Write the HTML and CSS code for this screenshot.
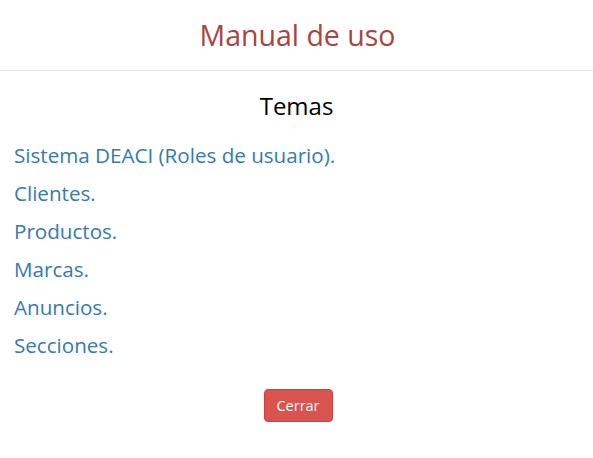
FILE: index.html
```html
<!DOCTYPE html>
<html lang="es">
<head>
<meta charset="utf-8">
<title>Manual de uso</title>
<link rel="stylesheet" href="styles.css">
</head>
<body>
<div class="modal">
  <div class="modal-header">
    <h2 class="modal-title">Manual de uso</h2>
  </div>
  <div class="modal-body">
    <h3 class="topics-title">Temas</h3>
    <ul class="topics">
      <li><a href="#">Sistema DEACI (Roles de usuario).</a></li>
      <li><a href="#">Clientes.</a></li>
      <li><a href="#">Productos.</a></li>
      <li><a href="#">Marcas.</a></li>
      <li><a href="#">Anuncios.</a></li>
      <li><a href="#">Secciones.</a></li>
    </ul>
    <div class="actions">
      <button class="btn-danger" type="button">Cerrar</button>
    </div>
  </div>
</div>
</body>
</html>
```
FILE: styles.css
```css
* { box-sizing: border-box; }
html, body {
  margin: 0;
  padding: 0;
  background: #ffffff;
}
body {
  font-family: "Comic Sans MS", "Open Sans", "DejaVu Sans", sans-serif;
  color: #000;
}
.modal {
  width: 593px;
  height: 458px;
  display: flex;
  flex-direction: column;
}
.modal-header {
  height: 71px;
  border-bottom: 1px solid #e5e5e5;
  display: flex;
  align-items: center;
  justify-content: center;
}
.modal-title {
  margin: 0 0 0 2px;
  font-size: 28.5px;
  font-weight: normal;
  color: #a94442;
  line-height: 1;
}
.modal-body {
  padding: 21px 14px 0;
  display: flex;
  flex-direction: column;
}
.topics-title {
  margin: 0;
  text-align: center;
  font-size: 24px;
  font-weight: normal;
  line-height: 28px;
}
.topics {
  list-style: none;
  margin: 16px 0 0;
  padding: 0;
  display: flex;
  flex-direction: column;
}
.topics li {
  height: 38px;
  line-height: 38px;
  font-size: 20.6px;
}
.topics a {
  color: #337ab7;
  text-decoration: none;
}
.actions {
  display: flex;
  justify-content: center;
  margin-top: 25px;
  padding-left: 3px;
}
.btn-danger {
  width: 69px;
  height: 33px;
  background: #d9534f;
  border: 1px solid #d43f3a;
  border-radius: 4px;
  color: #fff;
  font-family: inherit;
  font-size: 14.5px;
  font-weight: 500;
  padding: 0;
}
```
